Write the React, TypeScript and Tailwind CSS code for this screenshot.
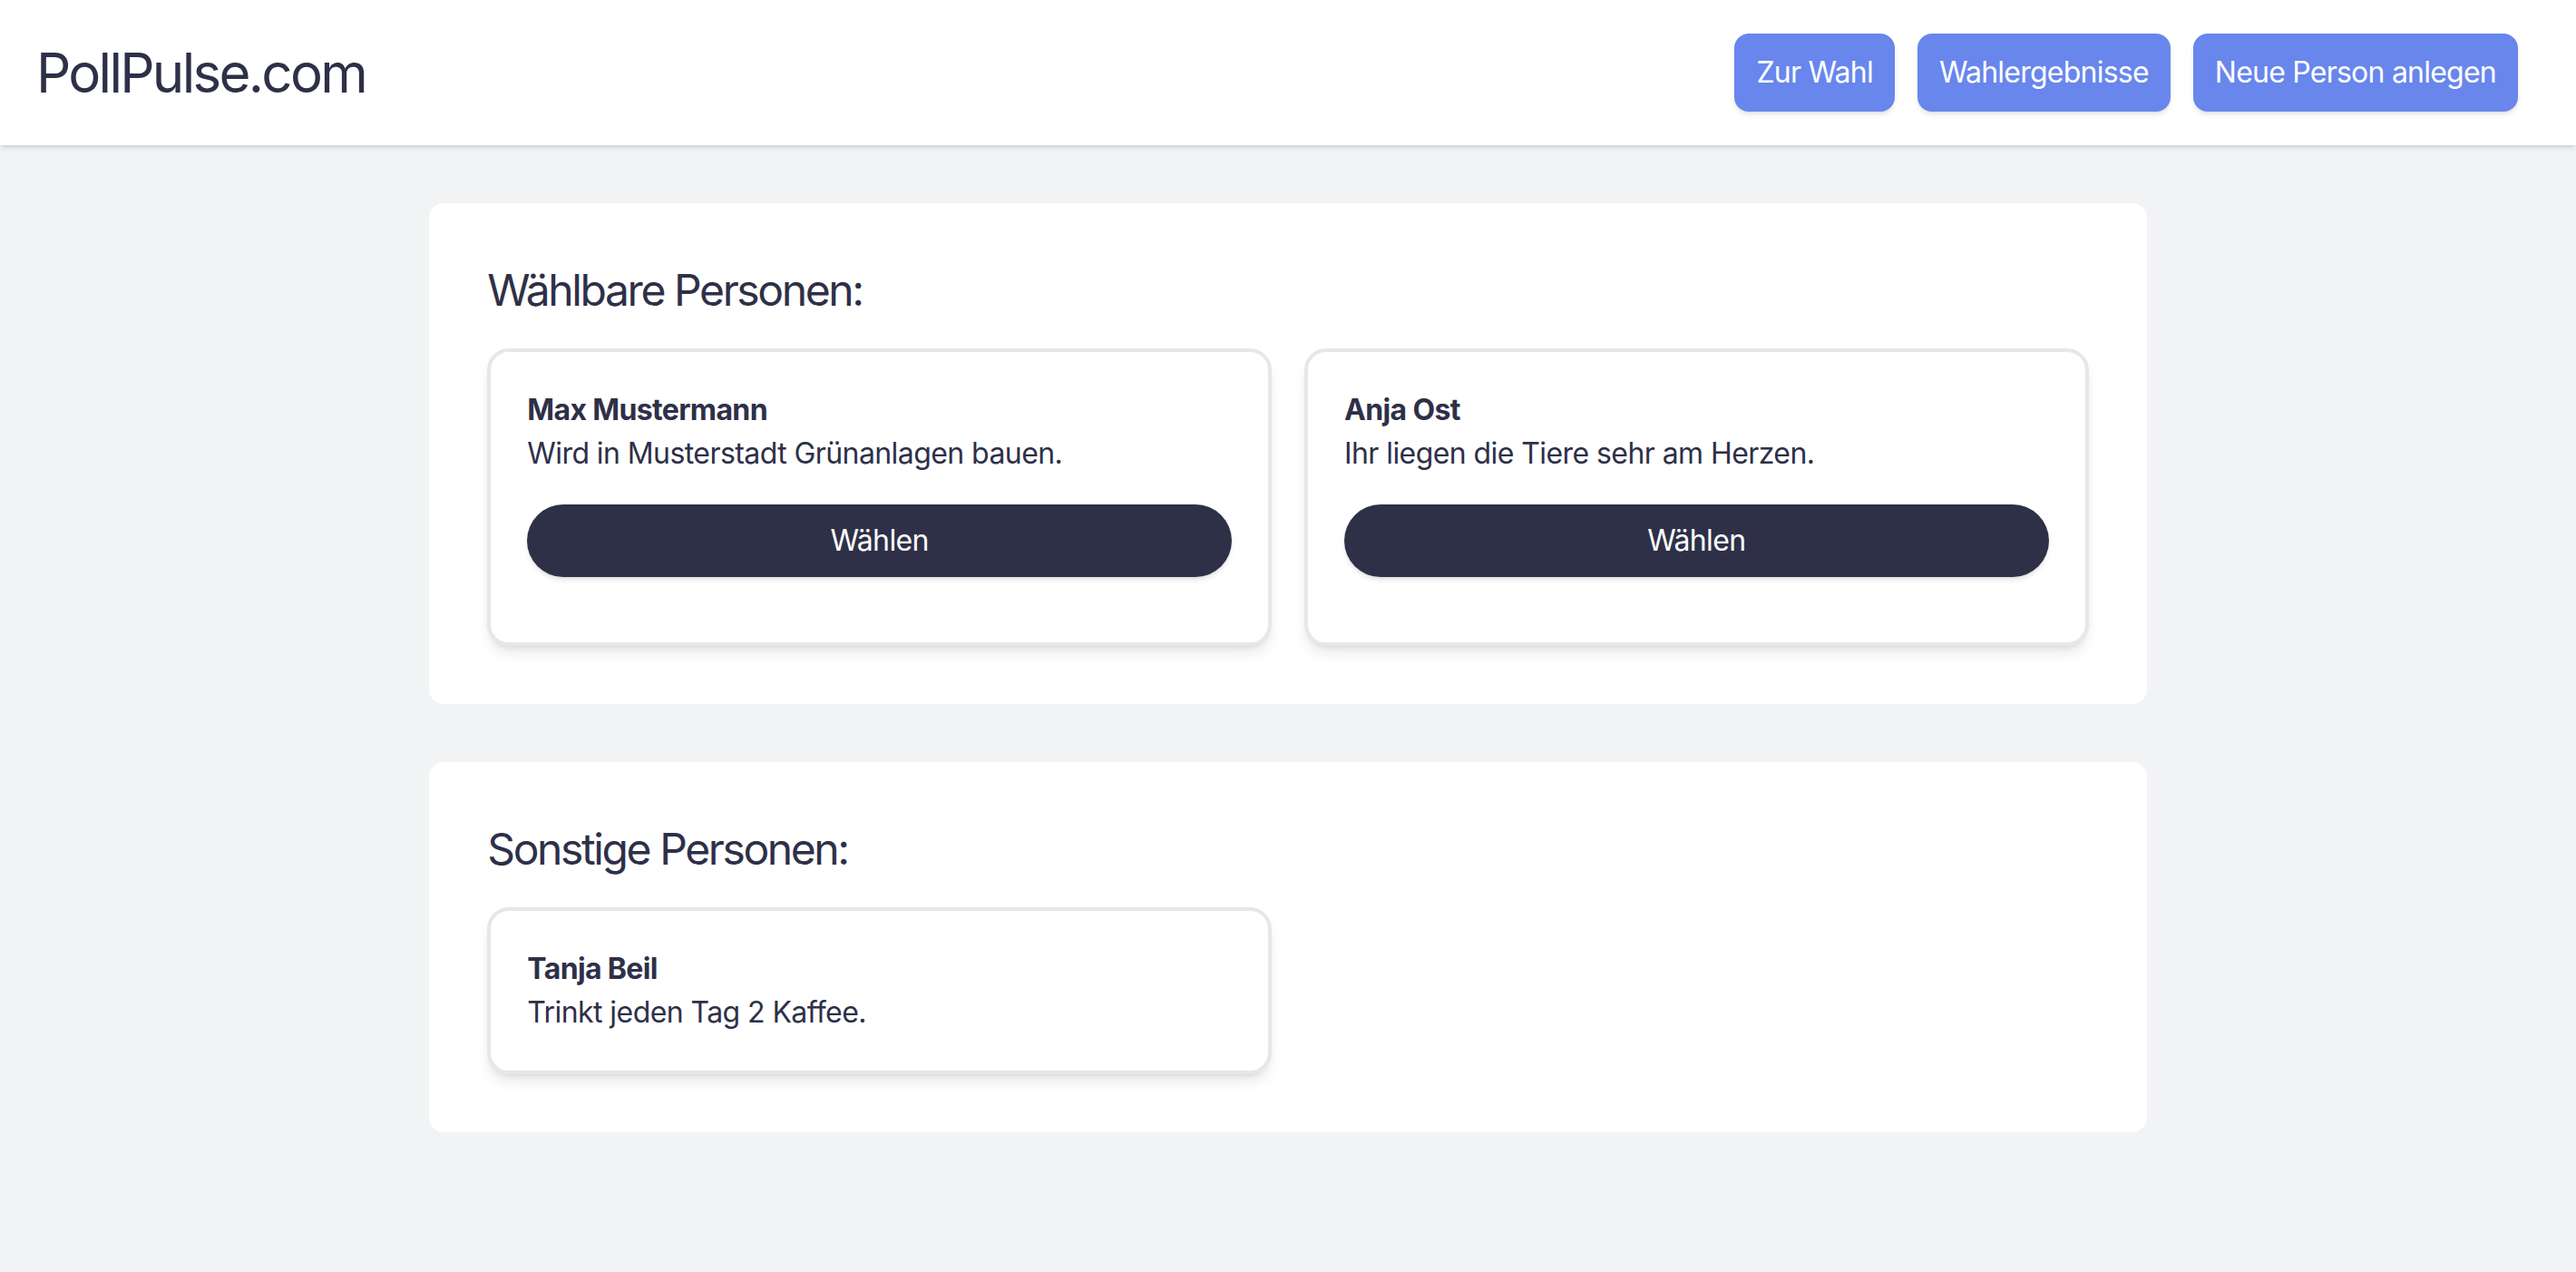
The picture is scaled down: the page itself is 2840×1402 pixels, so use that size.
import React from "react";

type Person = {
  name: string;
  text: string;
};

const wählbar: Person[] = [
  { name: "Max Mustermann", text: "Wird in Musterstadt Grünanlagen bauen." },
  { name: "Anja Ost", text: "Ihr liegen die Tiere sehr am Herzen." },
];

const sonstige: Person[] = [
  { name: "Tanja Beil", text: "Trinkt jeden Tag 2 Kaffee." },
];

function NavButton({ label }: { label: string }) {
  return (
    <button className="rounded-2xl bg-[#6886ec] px-6 py-[19px] text-[32px] leading-[48px] tracking-[-0.024em] text-white shadow-md">
      {label}
    </button>
  );
}

function PersonCard({ person, canVote }: { person: Person; canVote: boolean }) {
  return (
    <div className="rounded-3xl border-[4px] border-[#e5e7eb] bg-white p-10 shadow-lg">
      <h3 className="text-[32px] font-bold leading-[48px] tracking-[-0.02em]">{person.name}</h3>
      <p className="text-[32px] leading-[48px] tracking-[-0.018em]">{person.text}</p>
      {canVote && (
        <button className="mt-8 mb-8 w-full rounded-full bg-[#2e3048] py-4 text-[32px] leading-[48px] tracking-[-0.02em] text-white shadow-md">
          Wählen
        </button>
      )}
    </div>
  );
}

function Section({ title, people, canVote }: { title: string; people: Person[]; canVote: boolean }) {
  return (
    <section className="mx-auto w-2/3 rounded-2xl bg-white p-16">
      <h2 className="mb-8 text-[48px] leading-[64px] tracking-[-0.05em]">{title}</h2>
      <div className="grid grid-cols-2 gap-9">
        {people.map((p) => (
          <PersonCard key={p.name} person={p} canVote={canVote} />
        ))}
      </div>
    </section>
  );
}

export default function App() {
  return (
    <div className="min-h-screen bg-[#f2f3f5] pb-16 font-['Inter',sans-serif] text-[#2e3048]">
      <header className="flex h-[160px] items-center justify-between bg-white pl-10 pr-16 shadow-md">
        <h1 className="text-[60px] leading-[80px] tracking-[-0.045em]">PollPulse.com</h1>
        <nav className="flex gap-[25px]">
          <NavButton label="Zur Wahl" />
          <NavButton label="Wahlergebnisse" />
          <NavButton label="Neue Person anlegen" />
        </nav>
      </header>
      <main className="mt-16 flex flex-col gap-16">
        <Section title="Wählbare Personen:" people={wählbar} canVote={true} />
        <Section title="Sonstige Personen:" people={sonstige} canVote={false} />
      </main>
    </div>
  );
}
